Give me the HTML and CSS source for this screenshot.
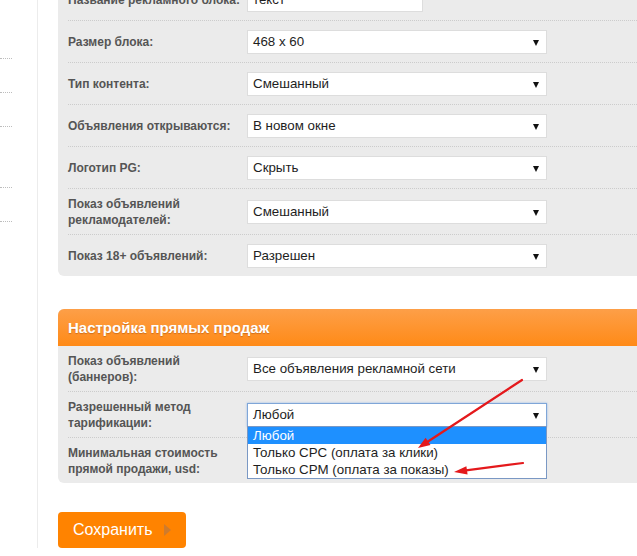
FILE: index.html
```html
<!DOCTYPE html>
<html lang="ru">
<head>
<meta charset="utf-8">
<title>Настройки рекламного блока</title>
<link rel="stylesheet" href="styles.css">
</head>
<body>
<div class="page">
  <aside class="sidebar">
    <ul class="menu">
      <li class="menu-item"></li>
      <li class="menu-item"></li>
      <li class="menu-item"></li>
      <li class="menu-item tall"></li>
      <li class="menu-item"></li>
    </ul>
  </aside>
  <main class="content">
    <section class="panel panel-top">
      <div class="row">
        <div class="lbl">Название рекламного блока:</div>
        <div class="field"><div class="input short">текст</div></div>
      </div>
      <div class="row">
        <div class="lbl">Размер блока:</div>
        <div class="field"><div class="select">468 x 60</div></div>
      </div>
      <div class="row">
        <div class="lbl">Тип контента:</div>
        <div class="field"><div class="select">Смешанный</div></div>
      </div>
      <div class="row">
        <div class="lbl">Объявления открываются:</div>
        <div class="field"><div class="select">В новом окне</div></div>
      </div>
      <div class="row">
        <div class="lbl">Логотип PG:</div>
        <div class="field"><div class="select">Скрыть</div></div>
      </div>
      <div class="row two">
        <div class="lbl">Показ объявлений<br>рекламодателей:</div>
        <div class="field"><div class="select">Смешанный</div></div>
      </div>
      <div class="row">
        <div class="lbl">Показ 18+ объявлений:</div>
        <div class="field"><div class="select">Разрешен</div></div>
      </div>
    </section>

    <section class="panel panel-sales">
      <h2 class="panel-head">Настройка прямых продаж</h2>
      <div class="row two">
        <div class="lbl">Показ объявлений<br>(баннеров):</div>
        <div class="field"><div class="select">Все объявления рекламной сети</div></div>
      </div>
      <div class="row two">
        <div class="lbl">Разрешенный метод<br>тарификации:</div>
        <div class="field open">
          <div class="select focused">Любой</div>
          <ul class="options">
            <li class="option selected">Любой</li>
            <li class="option">Только CPC (оплата за клики)</li>
            <li class="option">Только CPM (оплата за показы)</li>
          </ul>
        </div>
      </div>
      <div class="row two">
        <div class="lbl">Минимальная стоимость<br>прямой продажи, usd:</div>
        <div class="field"><div class="input price"></div></div>
      </div>
    </section>

    <button class="save" type="button">Сохранить <span class="tri"></span></button>
  </main>
</div>

<svg class="arrows" width="637" height="556" viewBox="0 0 637 556" aria-hidden="true">
  <line x1="522" y1="380" x2="428" y2="441.5" stroke="#e4191c" stroke-width="2.2" stroke-linecap="round"/>
  <polygon points="418,448 430.5,445 425.6,437.8" fill="#e4191c"/>
  <line x1="523" y1="463" x2="466" y2="470.4" stroke="#e4191c" stroke-width="2.2" stroke-linecap="round"/>
  <polygon points="454,472 467.6,474.5 466.4,466.2" fill="#e4191c"/>
</svg>
</body>
</html>
```

FILE: styles.css
```css
html, body {
  margin: 0;
  padding: 0;
  background: #ffffff;
}

body {
  font-family: "Liberation Sans", Arial, sans-serif;
  overflow: hidden;
}

.page {
  display: flex;
  align-items: stretch;
  margin-top: -21px;
}

.sidebar {
  width: 37px;
  flex: 0 0 37px;
  border-right: 1px solid #ececec;
}

.menu {
  list-style: none;
  margin: 0;
  padding: 46px 0 0 0;
}

.menu-item {
  width: 12px;
  height: 33px;
  border-bottom: 1px dotted #bdbdbd;
}

.menu-item.tall {
  height: 60px;
}

.content {
  flex: 1;
  padding-left: 20px;
  min-width: 0;
}

.panel {
  background: #ebebeb;
  padding-left: 10px;
}

.panel-top {
  border-radius: 0 0 0 6px;
}

.panel-sales {
  margin-top: 33px;
  border-radius: 6px 0 0 6px;
}

.panel-head {
  margin: 0 0 0 -10px;
  height: 37px;
  line-height: 37px;
  padding-left: 10px;
  font-size: 15px;
  font-weight: bold;
  color: #ffffff;
  text-shadow: 0 1px 1px rgba(120, 50, 0, 0.35);
  background: linear-gradient(to bottom, #fd9f48 0%, #ff8a17 100%);
  border-radius: 6px 0 0 0;
}

.row {
  display: grid;
  grid-template-columns: 179px 300px;
  align-items: center;
  padding: 9px 0 8px;
  border-bottom: 1px dotted #cccccc;
}

.row.two {
  padding: 7px 0 6px;
}

.row:last-child {
  border-bottom: none;
}

.lbl {
  font-size: 12px;
  line-height: 16px;
  font-weight: bold;
  color: #555555;
  white-space: nowrap;
}

.field {
  position: relative;
}

.select,
.input {
  box-sizing: border-box;
  height: 24px;
  border: 1px solid #dddddd;
  background: #ffffff;
  font-size: 13.33px;
  line-height: 22px;
  padding-left: 5px;
  color: #1e1e1e;
  white-space: nowrap;
}

.select {
  position: relative;
  width: 300px;
}

.select::after {
  content: "";
  position: absolute;
  right: 7px;
  top: 9px;
  border-top: 6px solid #111111;
  border-left: 3.5px solid transparent;
  border-right: 3.5px solid transparent;
}

.select.focused {
  border-color: #7fa6d8;
  box-shadow: 0 0 2px rgba(90, 150, 230, 0.6);
}

.input.short {
  width: 176px;
}

.input.price {
  width: 120px;
}

.options {
  position: absolute;
  left: 0;
  top: 23px;
  z-index: 5;
  box-sizing: border-box;
  width: 300px;
  margin: 0;
  padding: 0;
  list-style: none;
  background: #ffffff;
  border: 1px solid #7a98c4;
}

.option {
  height: 17px;
  line-height: 17px;
  padding-left: 5px;
  font-size: 13.33px;
  color: #1e1e1e;
  white-space: nowrap;
}

.option.selected {
  background: #1e90ff;
  color: #ffffff;
}

.save {
  margin-top: 29px;
  display: flex;
  align-items: center;
  gap: 11px;
  width: 128px;
  height: 36px;
  padding: 0 0 0 15px;
  border: none;
  border-radius: 4px;
  background: #ff8300;
  color: #ffffff;
  font-family: "Liberation Sans", Arial, sans-serif;
  font-size: 16px;
  cursor: pointer;
}

.tri {
  width: 0;
  height: 0;
  border-left: 7px solid #cf7b2c;
  border-top: 6px solid transparent;
  border-bottom: 6px solid transparent;
}

.arrows {
  position: absolute;
  left: 0;
  top: 0;
  pointer-events: none;
  z-index: 10;
}
```
